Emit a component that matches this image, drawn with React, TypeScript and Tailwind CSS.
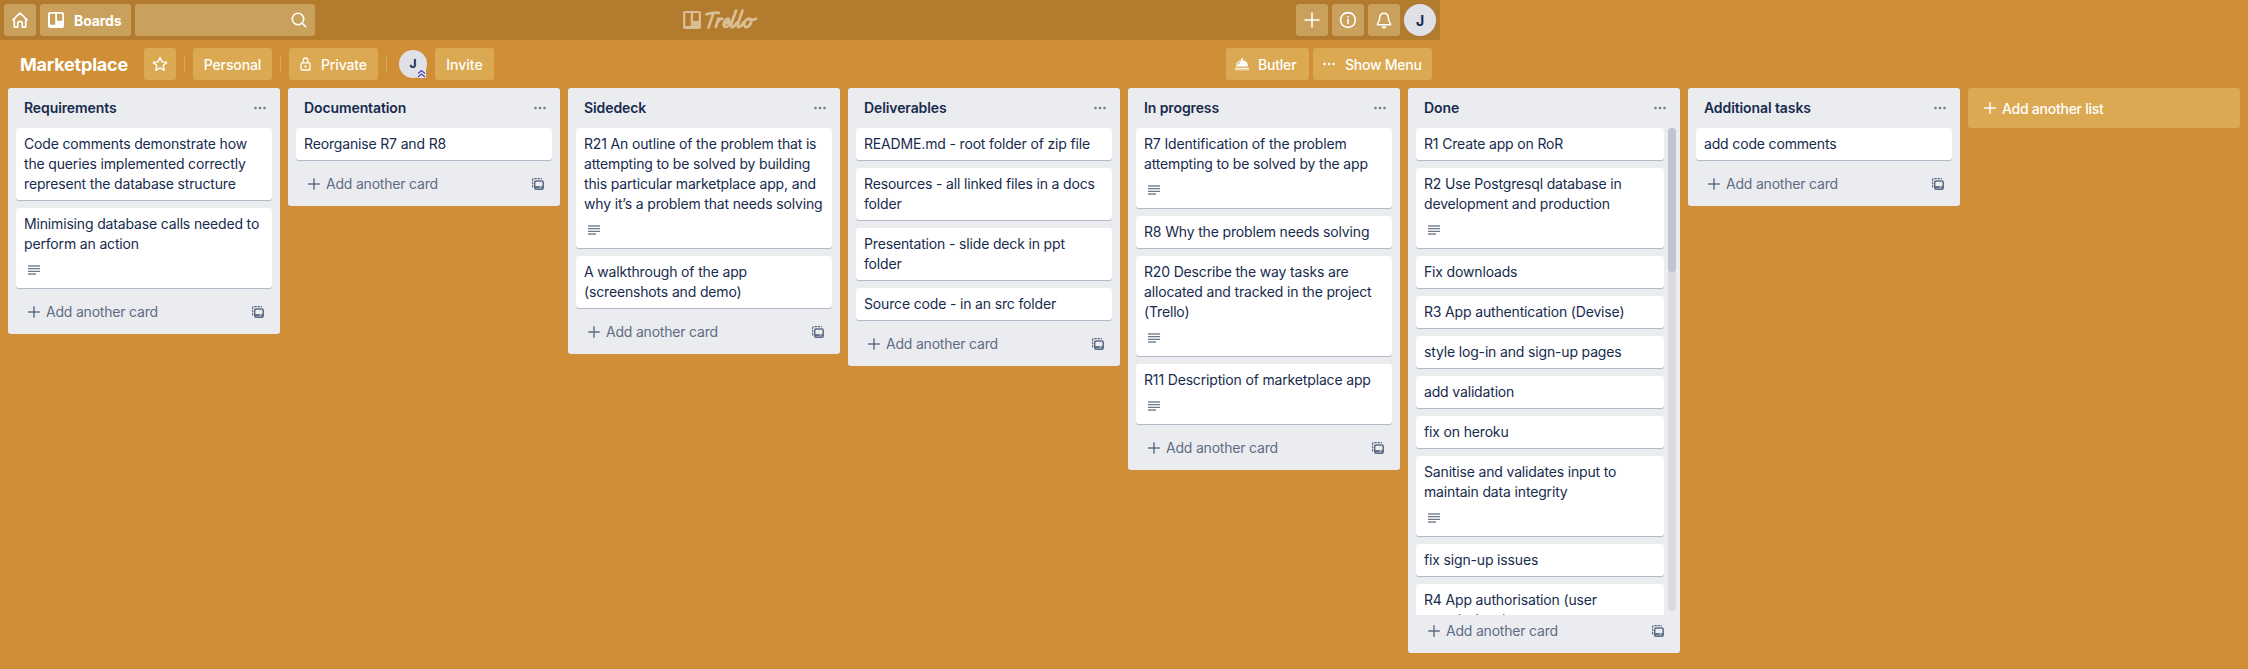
import type { ReactNode } from "react";

type CardData = { text: string; desc?: boolean };
type ListData = { title: string; cards: CardData[]; scroll?: boolean };

const lists: ListData[] = [
  {
    title: "Requirements",
    cards: [
      { text: "Code comments demonstrate how\nthe queries implemented correctly\nrepresent the database structure" },
      { text: "Minimising database calls needed to\nperform an action", desc: true },
    ],
  },
  { title: "Documentation", cards: [{ text: "Reorganise R7 and R8" }] },
  {
    title: "Sidedeck",
    cards: [
      {
        text: "R21 An outline of the problem that is\nattempting to be solved by building\nthis particular marketplace app, and\nwhy it’s a problem that needs solving",
        desc: true,
      },
      { text: "A walkthrough of the app\n(screenshots and demo)" },
    ],
  },
  {
    title: "Deliverables",
    cards: [
      { text: "README.md - root folder of zip file" },
      { text: "Resources - all linked files in a docs\nfolder" },
      { text: "Presentation - slide deck in ppt\nfolder" },
      { text: "Source code - in an src folder" },
    ],
  },
  {
    title: "In progress",
    cards: [
      { text: "R7 Identification of the problem\nattempting to be solved by the app", desc: true },
      { text: "R8 Why the problem needs solving" },
      { text: "R20 Describe the way tasks are\nallocated and tracked in the project\n(Trello)", desc: true },
      { text: "R11 Description of marketplace app", desc: true },
    ],
  },
  {
    title: "Done",
    scroll: true,
    cards: [
      { text: "R1 Create app on RoR" },
      { text: "R2 Use Postgresql database in\ndevelopment and production", desc: true },
      { text: "Fix downloads" },
      { text: "R3 App authentication (Devise)" },
      { text: "style log-in and sign-up pages" },
      { text: "add validation" },
      { text: "fix on heroku" },
      { text: "Sanitise and validates input to\nmaintain data integrity", desc: true },
      { text: "fix sign-up issues" },
      { text: "R4 App authorisation (user\npermissions)" },
    ],
  },
  { title: "Additional tasks", cards: [{ text: "add code comments" }] },
];

function Plus({ size = 12, stroke = 1.4 }: { size?: number; stroke?: number }) {
  return (
    <svg width={size} height={size} viewBox="0 0 12 12" fill="none" stroke="currentColor" strokeWidth={stroke} strokeLinecap="round">
      <path d="M6 .7v10.6M.7 6h10.6" />
    </svg>
  );
}

function Dots() {
  return (
    <svg width="12" height="4" viewBox="0 0 12 4" fill="currentColor">
      <circle cx="1.5" cy="2" r="1.25" />
      <circle cx="6" cy="2" r="1.25" />
      <circle cx="10.5" cy="2" r="1.25" />
    </svg>
  );
}

function TemplateIcon() {
  return (
    <svg width="12" height="12" viewBox="0 0 12 12" fill="none" stroke="currentColor">
      <path d="M.6 9.500V2Q.6.6 2 .6h8" strokeWidth="1.200" strokeDasharray="2.400 .9" />
      <rect x="2.700" y="3" width="8.500" height="8.200" rx="1.200" strokeWidth="1.500" />
      <path d="M3 9.200h8.200" strokeWidth="2.200" />
      <path d="M7.500 9h1.800" stroke="#ebecf0" strokeWidth="1" />
    </svg>
  );
}

function DescIcon() {
  return (
    <svg width="12" height="10" viewBox="0 0 12 10" fill="none" stroke="#6b778c">
      <path d="M0 1h12" strokeWidth="1.800" opacity=".75" />
      <path d="M0 3.700h12M0 6.400h12" strokeWidth="1.300" />
      <path d="M0 9h8" strokeWidth="1.800" opacity=".75" />
    </svg>
  );
}

function Card({ card }: { card: CardData }) {
  return (
    <div className="shrink-0 rounded-[3px] bg-white px-2 py-1.5 shadow-[0_1px_0_#b3bac9]">
      <div className="whitespace-pre text-[14px] leading-5 tracking-[-0.16px] text-[#172b4d]">{card.text}</div>
      {card.desc && (
        <div className="flex h-7 items-center pt-1 pl-1">
          <DescIcon />
        </div>
      )}
    </div>
  );
}

function List({ list }: { list: ListData }) {
  return (
    <section className="flex w-[272px] shrink-0 flex-col rounded-[3px] bg-[#ebecf0]">
      <header className="flex h-10 items-center justify-between pr-3.5 pl-4">
        <h2 className="text-[14px] font-semibold leading-5 tracking-[-0.1px] text-[#172b4d]">{list.title}</h2>
        <span className="text-[#6b778c]">
          <Dots />
        </span>
      </header>
      {list.scroll ? (
        <div className="flex h-[487px] gap-1 pr-2 pl-2">
          <div className="flex flex-1 flex-col gap-2 overflow-hidden">
            {list.cards.map((c) => (
              <Card key={c.text} card={c} />
            ))}
          </div>
          <div className="-mr-1 h-[483px] w-2 rounded bg-[#dadbe2]">
            <div className="h-36 w-2 rounded bg-[#bfc4ce]" />
          </div>
        </div>
      ) : (
        <div className="flex flex-col gap-2 px-2 pb-2">
          {list.cards.map((c) => (
            <Card key={c.text} card={c} />
          ))}
        </div>
      )}
      <footer className="flex h-[38px] items-start justify-between pt-1.5 pr-4 pl-5 text-[#5e6c84]">
        <span className="flex h-5 items-center gap-1.5">
          <Plus />
          <span className="text-[14px] leading-5 tracking-[-0.2px]">Add another card</span>
        </span>
        <span className="flex h-5 items-center">
          <TemplateIcon />
        </span>
      </footer>
    </section>
  );
}

function NavButton({ children, className = "w-8 justify-center" }: { children?: ReactNode; className?: string }) {
  return <div className={`flex h-8 shrink-0 items-center rounded-[3px] bg-[#c9a05c] text-white ${className}`}>{children}</div>;
}

function BoardButton({ children, className }: { children: ReactNode; className: string }) {
  return (
    <div className={`flex h-8 shrink-0 items-center rounded-[3px] bg-[#dba952] text-[14px] font-medium text-white ${className}`}>
      {children}
    </div>
  );
}

function Divider({ className }: { className: string }) {
  return <div className={`h-4 w-px shrink-0 bg-[#dba952] ${className}`} />;
}

function TopBar() {
  return (
    <div className="flex h-10 w-[1440px] items-center justify-between bg-[#b27b2d] px-1">
      <div className="flex w-[600px] gap-1">
        <NavButton>
          <svg width="16" height="18" viewBox="0 0 16 18" fill="none" stroke="currentColor" strokeWidth="1.7" strokeLinejoin="round" strokeLinecap="round">
            <path d="M1 8.800 8 2l7 6.800M2.300 8v7.200q0 1 1 1h2.400v-3.700Q5.700 10.300 8 10.300t2.300 2.200v3.700h2.400q1 0 1-1V8" />
          </svg>
        </NavButton>
        <NavButton className="w-[91px] gap-2.5 pl-2">
          <svg width="16" height="16" viewBox="0 0 16 16" fill="currentColor" fillRule="evenodd">
            <path d="M2 0h12a2 2 0 0 1 2 2v12a2 2 0 0 1-2 2H2a2 2 0 0 1-2-2V2a2 2 0 0 1 2-2ZM2 1.7v11h5.2v-11ZM9 1.7v7.1h5.3V1.7Z" />
          </svg>
          <span className="text-[14px] font-bold tracking-[-0.1px]">Boards</span>
        </NavButton>
        <NavButton className="w-[180px] justify-end pr-2">
          <svg width="16" height="16" viewBox="0 0 16 16" fill="none" stroke="currentColor" strokeWidth="1.6" strokeLinecap="round">
            <circle cx="7" cy="7" r="5.7" />
            <path d="m11.2 11.2 3.6 3.6" />
          </svg>
        </NavButton>
      </div>
      <div className="flex w-[74px] items-center gap-[3px] text-[#d9bd93]">
        <svg className="shrink-0" width="18" height="18" viewBox="0 0 18 18" fill="currentColor" fillRule="evenodd">
          <path d="M2 0h14a2 2 0 0 1 2 2v14a2 2 0 0 1-2 2H2a2 2 0 0 1-2-2V2a2 2 0 0 1 2-2ZM2.3 2v13h5.4V2ZM10.1 2v8h5.6V2Z" />
        </svg>
        <svg className="shrink-0" width="54" height="24" viewBox="0 0 54 24" fill="none" stroke="currentColor" strokeWidth="2.700" strokeLinecap="round" strokeLinejoin="round">
          <path d="M2.500 6.300Q8 4.300 15 4.800M9.300 5.500 4.500 19.500" />
          <path d="M14.500 10.500 11.800 19M13.500 14.500q2.500-4.300 5-3.700" />
          <path d="M19.800 15.800q5-.8 5.300-3.800-.3-2.300-2.800-.6-3 2.800-2.600 5.800.8 2.800 3.800 1.100 2.300-1.500 4-4.300" />
          <path d="M32 2.500 27.500 15.500q-1 4.500 1.500 3.500 2-1 4-4.500" />
          <path d="M38.500 2.500 34 15.500q-1 4.500 1.500 3.500 2-1 4-4.500" />
          <path d="M44.500 10.500q-3.800 1.300-4.300 5.500 0 3.800 3 3 3.500-1.300 4-5.500 0-3-2.700-3 2.500 2.700 7.500.2" />
        </svg>
      </div>
      <div className="flex w-[600px] justify-end gap-1">
        <NavButton>
          <Plus size={16} stroke={1.2} />
        </NavButton>
        <NavButton>
          <svg width="18" height="18" viewBox="0 0 18 18" fill="none" stroke="currentColor" strokeWidth="1.6" strokeLinecap="round">
            <circle cx="9" cy="9" r="7.4" />
            <path d="M9 8.600v3.900" />
            <circle cx="9" cy="5.800" r=".9" fill="currentColor" stroke="none" />
          </svg>
        </NavButton>
        <NavButton>
          <svg width="16" height="18" viewBox="0 0 16 18" fill="none" stroke="currentColor" strokeWidth="1.5" strokeLinejoin="round" strokeLinecap="round">
            <path d="M8 2.200q4 0 4.300 4.300.2 4 2.200 6.300v.9h-13v-.9q2-2.300 2.200-6.300Q4 2.200 8 2.200Z" />
            <path d="M6.800 16q1.200 1 2.400 0" strokeWidth="1.800" />
          </svg>
        </NavButton>
        <div className="flex size-8 items-center justify-center rounded-full bg-[#dfe1e6] text-[14px] font-bold text-[#172b4d]">J</div>
      </div>
    </div>
  );
}

function BoardHeader() {
  return (
    <div className="flex h-12 w-[1440px] items-center justify-between pr-2 pl-5">
      <div className="flex items-center">
        <h1 className="w-[124px] text-[18px] font-bold tracking-[-0.2px] text-white">Marketplace</h1>
        <BoardButton className="w-8 justify-center">
          <svg width="16" height="16" viewBox="0 0 16 16" fill="none" stroke="currentColor" strokeWidth="1.400" strokeLinejoin="round">
            <path d="m8 1.500 2 4.400 4.700.5-3.500 3.200 1 4.700L8 11.900l-4.200 2.400 1-4.700L1.300 6.400 6 5.900Z" />
          </svg>
        </BoardButton>
        <Divider className="ml-2" />
        <BoardButton className="ml-2 w-[79px] justify-center tracking-[-0.1px]">Personal</BoardButton>
        <Divider className="ml-2" />
        <BoardButton className="ml-2 w-[89px] gap-2.5 pl-[11px] tracking-[-0.15px]">
          <svg width="11" height="14" viewBox="0 0 11 14" fill="none" stroke="currentColor" strokeWidth="1.300">
            <rect x="1" y="5.800" width="9" height="7.200" rx="1" />
            <path d="M3.200 5.800V3.300Q3.400 1 5.500 1t2.300 2.300v2.500" />
            <circle cx="5.500" cy="9.400" r="1.100" fill="currentColor" stroke="none" />
          </svg>
          Private
        </BoardButton>
        <Divider className="ml-2" />
        <div className="relative ml-3 flex size-7 items-center justify-center rounded-full bg-[#dfe1e6] text-[12px] font-bold text-[#172b4d]">
          J
          <svg className="absolute right-[1px] bottom-0" width="9" height="9" viewBox="0 0 9 9">
            <rect width="9" height="9" fill="#e6e4ee" />
            <path d="m1 4.500 3.500-3 3.500 3M1 8l3.500-3L8 8" fill="none" stroke="#4a45ad" strokeWidth="1.300" />
          </svg>
        </div>
        <BoardButton className="ml-2 w-[59px] justify-center">Invite</BoardButton>
      </div>
      <div className="flex gap-1">
        <BoardButton className="w-[83px] gap-[9px] pl-[9px] tracking-[-0.2px]">
          <svg width="14" height="13" viewBox="0 0 14 13" fill="currentColor">
            <circle cx="7" cy="1.400" r="1.100" />
            <path d="M1 8.500Q1.400 2.300 7 2.200T13 8.500Z" />
            <path d="M0 9.800h14v1H0Z" />
            <path d="M0 11.200h14v1.200H0Z" opacity=".6" />
            <path d="M2.800 6.500Q3.500 4.500 5.300 4" fill="none" stroke="#a58a60" strokeWidth=".9" />
          </svg>
          Butler
        </BoardButton>
        <BoardButton className="w-[119px] gap-2.5 pl-2.5 tracking-[-0.25px] whitespace-nowrap">
          <Dots />
          Show Menu
        </BoardButton>
      </div>
    </div>
  );
}

export default function App() {
  return (
    <div className="h-[669px] w-[2248px] overflow-hidden bg-[#d08f36] font-[Inter,sans-serif]">
      <TopBar />
      <BoardHeader />
      <main className="flex items-start gap-2 px-2">
        {lists.map((l) => (
          <List key={l.title} list={l} />
        ))}
        <div className="flex h-10 w-[272px] shrink-0 items-center gap-1.5 rounded-[3px] bg-[#dba952] pl-4 text-[14px] font-medium tracking-[-0.25px] text-white">
          <Plus />
          Add another list
        </div>
      </main>
    </div>
  );
}
